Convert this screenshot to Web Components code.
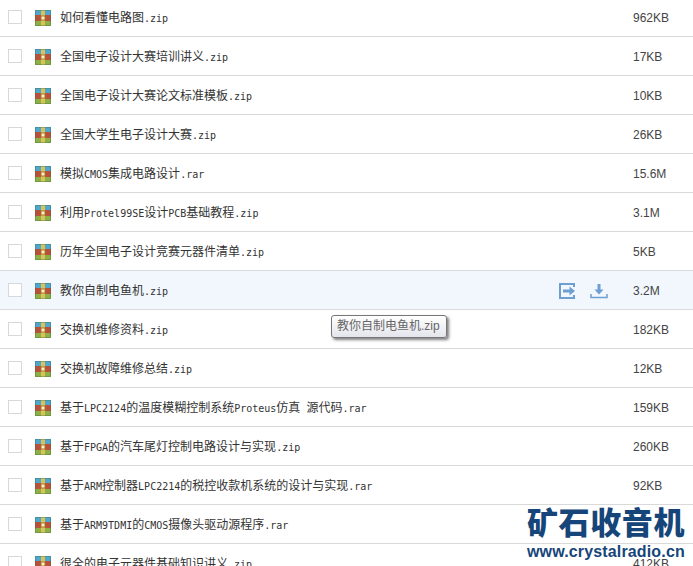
<!DOCTYPE html>
<html>
<head>
<meta charset="utf-8">
<style>
    html, body { margin: 0; height: 566px; overflow: hidden; background: #fff; }
</style>
</head>
<body>
<file-list>
    <file-row size="962KB" name="如何看懂电路图.zip"></file-row>
    <file-row size="17KB" name="全国电子设计大赛培训讲义.zip"></file-row>
    <file-row size="10KB" name="全国电子设计大赛论文标准模板.zip"></file-row>
    <file-row size="26KB" name="全国大学生电子设计大赛.zip"></file-row>
    <file-row size="15.6M" name="模拟CMOS集成电路设计.rar"></file-row>
    <file-row size="3.1M" name="利用Protel99SE设计PCB基础教程.zip"></file-row>
    <file-row size="5KB" name="历年全国电子设计竞赛元器件清单.zip"></file-row>
    <file-row size="3.2M" name="教你自制电鱼机.zip" active></file-row>
    <file-row size="182KB" name="交换机维修资料.zip"></file-row>
    <file-row size="12KB" name="交换机故障维修总结.zip"></file-row>
    <file-row size="159KB" name="基于LPC2124的温度模糊控制系统Proteus仿真 源代码.rar"></file-row>
    <file-row size="260KB" name="基于FPGA的汽车尾灯控制电路设计与实现.zip"></file-row>
    <file-row size="92KB" name="基于ARM控制器LPC2214的税控收款机系统的设计与实现.rar"></file-row>
    <file-row name="基于ARM9TDMI的CMOS摄像头驱动源程序.rar"></file-row>
    <file-row size="412KB" name="很全的电子元器件基础知识讲义.zip"></file-row>
</file-list>
<file-tip>教你自制电鱼机.zip</file-tip>
<site-mark></site-mark>

<script>
class FileList extends HTMLElement {
    constructor() {
        super();
        this.attachShadow({ mode: 'open' });
        this.shadowRoot.innerHTML = `
            <style>
                :host { display: flex; flex-direction: column; margin-top: -2px; }
            </style>
            <slot></slot>
        `;
    }
}

class FileRow extends HTMLElement {
    constructor() {
        super();
        this.attachShadow({ mode: 'open' });
    }

    connectedCallback() {
        const size = this.getAttribute('size') || '';
        // latin runs are narrower than the CJK ones, as in a bitmap SimSun
        const name = (this.getAttribute('name') || '')
            .replace(/[\x20-\x7e]+/g, m => `<span class="lat">${m}</span>`);
        const actions = this.hasAttribute('active') ? `
            <div class="acciones">
                <svg width="18" height="16" viewBox="0 0 18 16" fill="none" stroke="#6d9fd2" stroke-width="2">
                    <path d="M15 4V1H1v14h14v-3"/>
                    <path d="M4 8h8" stroke-width="3"/>
                    <path d="M10.500 3.500L16 8l-5.500 4.500z" fill="#6d9fd2" stroke="none"/>
                </svg>
                <svg width="18" height="16" viewBox="0 0 18 16" fill="none" stroke="#6d9fd2" stroke-width="2">
                    <path d="M1 11v3.500h16V11" stroke-width="1.500"/>
                    <path d="M9 1v6" stroke-width="3"/>
                    <path d="M4.500 6.500h9L9 11.500z" fill="#6d9fd2" stroke="none"/>
                </svg>
            </div>` : '';

        this.shadowRoot.innerHTML = `
            <style>
                :host {
                    display: flex;
                    align-items: center;
                    box-sizing: border-box;
                    height: 39px;
                    flex: none;
                    padding: 2px 0 0 8px;
                    border-bottom: 1px solid #d9d9d9;
                    background: ${this.hasAttribute('active') ? '#f1f7fc' : '#fff'};
                    color: #333;
                    font: 12px "Noto Sans CJK SC", sans-serif;
                }
                .check {
                    width: 12px;
                    height: 12px;
                    margin-top: -2px;
                    border: 1px solid #d8d8d8;
                    background: #fff;
                    flex: none;
                }
                svg.rar { margin-left: 13px; flex: none; }
                .nombre {
                    margin: -4px 0 0 9px;
                    flex: 1;
                    white-space: pre;
                    overflow: hidden;
                }
                .lat { font: 10px "DejaVu Sans Mono", monospace; }
                .acciones { display: flex; gap: 13px; margin: -1px 25px 0 0; }
                .peso {
                    width: 60px;
                    flex: none;
                    color: #444;
                    font: 12px "Liberation Sans", sans-serif;
                }
            </style>
            <div class="check"></div>
            <svg class="rar" width="16" height="16" viewBox="0 0 16 16">
                <rect width="16" height="5" fill="#4fa6cf"/>
                <rect y="5" width="16" height="6" fill="#b9503a"/>
                <rect y="11" width="16" height="5" fill="#8cb046"/>
                <rect x="6" width="4" height="16" fill="#d8c25a"/>
                <rect x="6" y="6" width="4" height="4" fill="#fff3c8" stroke="#a8742c"/>
                <rect x=".5" y=".5" width="15" height="15" fill="none" stroke="#3d6b3a" stroke-opacity=".35"/>
            </svg>
            <div class="nombre">${name}</div>
            ${actions}
            <div class="peso">${size}</div>
        `;
    }
}

class FileTip extends HTMLElement {
    constructor() {
        super();
        this.attachShadow({ mode: 'open' });
        this.shadowRoot.innerHTML = `
            <style>
                :host {
                    position: absolute;
                    left: 331px;
                    top: 315px;
                    box-sizing: border-box;
                    height: 23px;
                    padding: 0 6px 0 5px;
                    line-height: 20px;
                    white-space: nowrap;
                    border: 1px solid #767676;
                    border-radius: 3px;
                    background: linear-gradient(#fff, #e4e5ec);
                    box-shadow: 2px 2px 3px rgba(0,0,0,0.5);
                    color: #666;
                    font: 12px "Liberation Sans", "Noto Sans CJK SC", sans-serif;
                }
            </style>
            <slot></slot>
        `;
    }
}

class SiteMark extends HTMLElement {
    constructor() {
        super();
        this.attachShadow({ mode: 'open' });
        this.shadowRoot.innerHTML = `
            <style>
                :host {
                    position: absolute;
                    left: 527px;
                    top: 501px;
                    width: 165px;
                    display: flex;
                    flex-direction: column;
                    color: #164679;
                    white-space: nowrap;
                }
                .cn {
                    font: 900 31px/40px "Noto Sans CJK SC", sans-serif;
                    letter-spacing: 0.6px;
                }
                .url {
                    font: bold 16px/20px "Liberation Sans", sans-serif;
                    letter-spacing: 0.15px;
                    margin-top: 1px;
                }
            </style>
            <div class="cn">矿石收音机</div>
            <div class="url">www.crystalradio.cn</div>
        `;
    }
}

customElements.define('file-list', FileList);
customElements.define('file-row', FileRow);
customElements.define('file-tip', FileTip);
customElements.define('site-mark', SiteMark);
</script>
</body>
</html>
